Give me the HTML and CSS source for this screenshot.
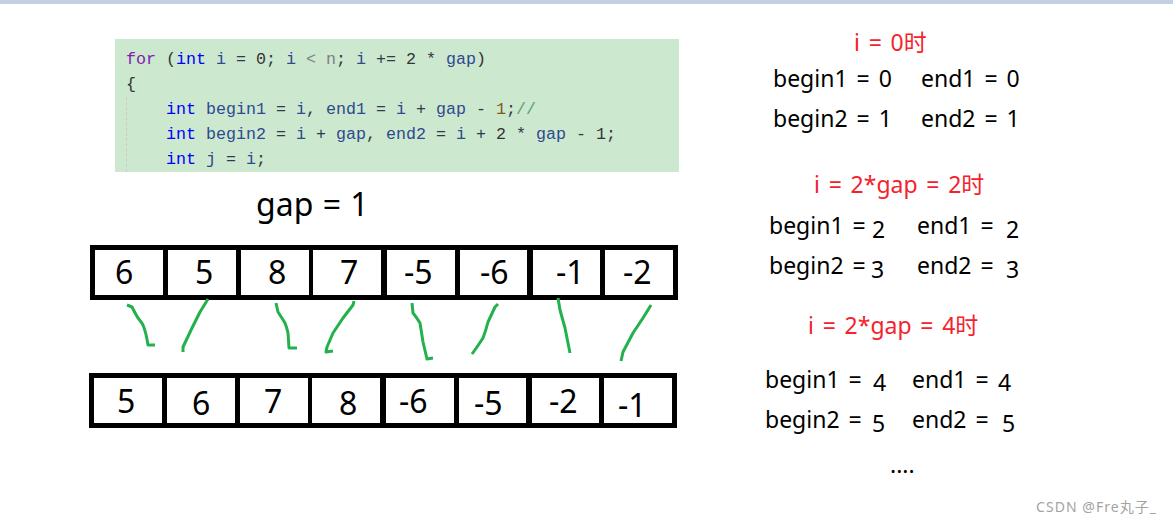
FILE: index.html
```html
<!DOCTYPE html>
<html lang="zh-CN">
<head>
<meta charset="utf-8">
<title>gap = 1</title>
<link rel="stylesheet" href="styles.css">
</head>
<body>
<div class="topbar"></div>
<main class="canvas">
  <pre class="code"><span class="guide"></span><span class="kw2">for</span> <span class="op">(</span><span class="kw">int</span> <span class="id">i</span> = <span class="num">0</span>; <span class="id">i</span> <span class="mut">&lt; n</span>; <span class="id">i</span> += <span class="num">2</span> * <span class="id">gap</span><span class="op">)</span>
<span class="op">{</span>
    <span class="kw">int</span> <span class="id">begin1</span> = <span class="id">i</span>, <span class="id">end1</span> = <span class="id">i</span> + <span class="id">gap</span> - <span class="brn">1</span>;<span class="com">//</span>
    <span class="kw">int</span> <span class="id">begin2</span> = <span class="id">i</span> + <span class="id">gap</span>, <span class="id">end2</span> = <span class="id">i</span> + <span class="num">2</span> * <span class="id">gap</span> - <span class="num">1</span>;
    <span class="kw">int</span> <span class="id">j</span> = <span class="id">i</span>;</pre>

  <div class="t gap-label">gap = 1</div>

  <div class="arr arr-a">
    <div class="cell"><span>6</span></div><div class="cell"><span>5</span></div><div class="cell"><span>8</span></div><div class="cell"><span>7</span></div><div class="cell"><span>-5</span></div><div class="cell"><span>-6</span></div><div class="cell"><span>-1</span></div><div class="cell"><span>-2</span></div>
  </div>

  <svg class="strokes" width="1173" height="521" viewBox="0 4 1173 521" aria-hidden="true">
    <path d="M127 305L132 307Q135 313 138 318Q142 323 143 325Q146 332 148 345L155 345"/>
    <path d="M208 299L200 312L192 328L183 347L183 352"/>
    <path d="M276 303L278 312Q282 318 285 323Q287 328 288 333L289 348L297 348"/>
    <path d="M354 301L353 305L343 318L333 333L327 347L326 352L333 351"/>
    <path d="M412 303L413 313Q417 318 420 323L423 342L427 359L433 358"/>
    <path d="M498 304L495 307L488 322Q486 330 483 338L477 347L472 354"/>
    <path d="M558 298L560 310L565 328L570 353"/>
    <path d="M651 305L643 318L633 333L623 352L621 361"/>
  </svg>

  <div class="arr arr-b">
    <div class="cell"><span>5</span></div><div class="cell"><span>6</span></div><div class="cell"><span>7</span></div><div class="cell"><span>8</span></div><div class="cell"><span>-6</span></div><div class="cell"><span>-5</span></div><div class="cell"><span>-2</span></div><div class="cell"><span>-1</span></div>
  </div>

  <div class="t red h1">i = 0时</div>
  <div class="t note l1">begin1 = 0</div><div class="t note r1">end1 = 0</div>
  <div class="t note l2">begin2 = 1</div><div class="t note r2">end2 = 1</div>

  <div class="t red h2">i = 2*gap = 2时</div>
  <div class="t note l3">begin1 =</div><div class="t note d3a">2</div><div class="t note r3">end1 =</div><div class="t note d3b">2</div>
  <div class="t note l4">begin2 =</div><div class="t note d4a">3</div><div class="t note r4">end2 =</div><div class="t note d4b">3</div>

  <div class="t red h3">i = 2*gap = 4时</div>
  <div class="t note l5">begin1 =</div><div class="t note d5a">4</div><div class="t note r5">end1 =</div><div class="t note d5b">4</div>
  <div class="t note l6">begin2 =</div><div class="t note d6a">5</div><div class="t note r6">end2 =</div><div class="t note d6b">5</div>

  <div class="t note dots">....</div>
  <div class="t mark">CSDN @Fre丸子_</div>
</main>
</body>
</html>
```

FILE: styles.css
```css
html, body {
  margin: 0;
  padding: 0;
  background: #fff;
  overflow: hidden;
}

body {
  font-family: "Noto Sans", "Noto Sans CJK SC", sans-serif;
  color: #000;
}

.topbar {
  height: 4px;
  background: #c3cfe2;
}

.canvas {
  position: relative;
  width: 1173px;
  height: 521px;
}

.t {
  position: absolute;
  white-space: pre;
  line-height: 1;
}

.code {
  position: absolute;
  left: 115px;
  top: 35px;
  width: 564px;
  height: 133px;
  box-sizing: border-box;
  margin: 0;
  padding: 8px 0 0 11px;
  overflow: hidden;
  background: #cce8cf;
  color: #2f3a4a;
  font-family: "Liberation Mono", monospace;
  font-size: 16.67px;
  line-height: 25px;
}

.guide {
  position: absolute;
  left: 11px;
  top: 58px;
  height: 75px;
  border-left: 1px dashed #c4cfc0;
}

.kw { color: #0000ff; }
.kw2 { color: #8020b0; }
.id { color: #2f4a90; }
.mut { color: #808080; }
.num { color: #333; }
.brn { color: #7a5a20; }
.op { color: #333; }
.com { color: #5f9f70; }

.gap-label {
  left: 256px;
  top: 184px;
  font-size: 32px;
  word-spacing: 1px;
}

.arr {
  position: absolute;
  display: flex;
  width: 588px;
  height: 55px;
  box-sizing: border-box;
  border: 5px solid #000;
  font-size: 32px;
}

.arr-a { left: 90px; top: 241px; }
.arr-b { left: 89px; top: 369px; }

.cell {
  box-sizing: border-box;
  flex: 0 0 73px;
  height: 45px;
  border-left: 5px solid #000;
  line-height: 43px;
}

.cell:nth-child(1) { border-left: 0; flex-basis: 68px; }
.cell:nth-child(4) { flex-basis: 72px; border-left-width: 4px; }
.cell:nth-child(5) { flex-basis: 74px; border-left-width: 6px; }
.cell:nth-child(6) { flex-basis: 72px; }
.cell:nth-child(7) { border-left-width: 6px; }

.arr-a .cell:nth-child(1) { padding-left: 20px; }
.arr-a .cell:nth-child(2) { padding-left: 27px; }
.arr-a .cell:nth-child(3) { padding-left: 27px; }
.arr-a .cell:nth-child(4) { padding-left: 27px; }
.arr-a .cell:nth-child(5) { padding-left: 17px; }
.arr-a .cell:nth-child(6) { padding-left: 20px; }
.arr-a .cell:nth-child(7) { padding-left: 23px; }
.arr-a .cell:nth-child(8) { padding-left: 18px; }

.arr-b .cell:nth-child(1) { padding-left: 23px; padding-top: 1px; }
.arr-b .cell:nth-child(2) { padding-left: 25px; padding-top: 3px; }
.arr-b .cell:nth-child(3) { padding-left: 24px; padding-top: 1px; }
.arr-b .cell:nth-child(4) { padding-left: 27px; padding-top: 3px; }
.arr-b .cell:nth-child(5) { padding-left: 13px; padding-top: 1px; }
.arr-b .cell:nth-child(6) { padding-left: 15px; padding-top: 3px; }
.arr-b .cell:nth-child(7) { padding-left: 17px; padding-top: 1px; }
.arr-b .cell:nth-child(8) { padding-left: 14px; padding-top: 5px; }

.strokes {
  position: absolute;
  left: 0;
  top: 0;
  pointer-events: none;
}

.strokes path {
  fill: none;
  stroke: #22b14c;
  stroke-width: 3;
  stroke-linejoin: round;
}

.red {
  color: #f5222d;
  font-size: 23px;
  word-spacing: 2.75px;
}

.note {
  font-size: 23px;
  word-spacing: 3px;
}

.h1 { left: 854px; top: 27px; }
.l1 { left: 773px; top: 63px; }
.r1 { left: 921px; top: 63px; }
.l2 { left: 773px; top: 103px; }
.r2 { left: 921px; top: 103px; }

.h2 { left: 814px; top: 169px; }
.l3 { left: 769px; top: 210px; }
.d3a { left: 872px; top: 214px; }
.r3 { left: 917px; top: 210px; }
.d3b { left: 1006px; top: 214px; }
.l4 { left: 769px; top: 250px; }
.d4a { left: 871px; top: 254px; }
.r4 { left: 917px; top: 250px; }
.d4b { left: 1006px; top: 254px; }

.h3 { left: 808px; top: 310px; }
.l5 { left: 765px; top: 364px; }
.d5a { left: 873px; top: 367px; }
.r5 { left: 912px; top: 364px; }
.d5b { left: 998px; top: 367px; }
.l6 { left: 765px; top: 404px; }
.d6a { left: 872px; top: 408px; }
.r6 { left: 912px; top: 404px; }
.d6b { left: 1002px; top: 408px; }

.dots { left: 890px; top: 449px; }

.mark {
  left: 1036px;
  top: 496px;
  font-size: 14px;
  color: #a3a3a3;
  letter-spacing: 1.05px;
}
```
